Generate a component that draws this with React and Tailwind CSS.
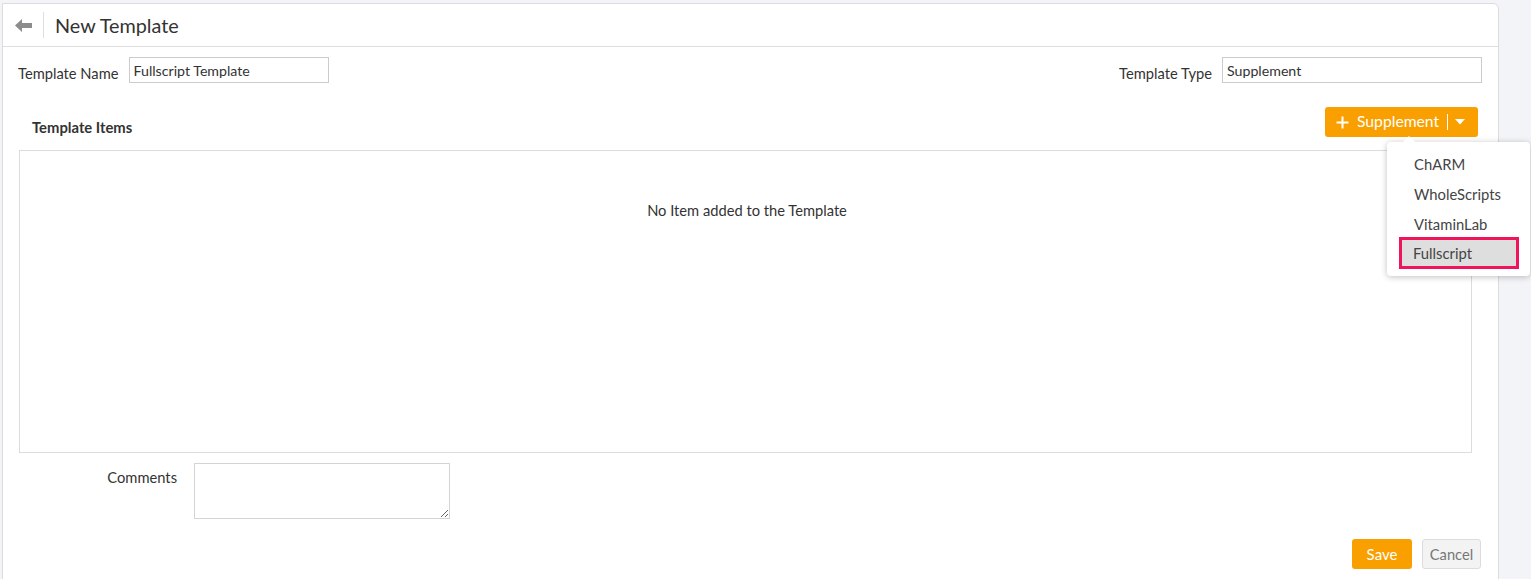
import React from "react";

const font = { fontFamily: "Lato, 'Open Sans', sans-serif" };

const App = () => {
  const items = ["ChARM", "WholeScripts", "VitaminLab", "Fullscript"];

  return (
    <div className="w-[1531px] h-[579px] bg-[#f3f4f8] overflow-hidden text-[#333]" style={font}>
      <div className="ml-[2px] mt-[3px] w-[1497px] h-[600px] bg-white border border-[#dcdcdc] rounded-tr-[6px]">
        {/* header */}
        <div className="h-[43px] flex items-center border-b border-[#dedede]">
          <div className="w-[40px] flex justify-center">
            <svg width="17" height="13" viewBox="0 0 17 13">
              <path d="M0 6.5 L7 0 L7 4 L17 4 L17 9 L7 9 L7 13 Z" fill="#8c8c8c" />
            </svg>
          </div>
          <div className="w-px h-[26px] bg-[#dedede]" />
          <h1 className="ml-[11px] text-[19.8px] text-[#333] leading-none mt-[1px]">New Template</h1>
        </div>

        {/* name / type */}
        <div className="flex items-center justify-between pl-[15px] pr-[16px] mt-[10px]">
          <div className="flex items-center">
            <span className="text-[14.7px] leading-[20px] mt-[5px]">Template Name</span>
            <input
              className="ml-[10px] w-[200px] h-[26px] border border-[#ccc] px-[4px] text-[14.2px] outline-none"
              defaultValue="Fullscript Template"
            />
          </div>
          <div className="flex items-center">
            <span className="text-[14.7px] leading-[20px] mt-[5px]">Template Type</span>
            <input
              className="ml-[10px] w-[260px] h-[26px] border border-[#ccc] px-[4px] text-[14.2px] outline-none"
              defaultValue="Supplement"
            />
          </div>
        </div>

        {/* template items header */}
        <div className="flex items-center justify-between pl-[29px] pr-[20px] mt-[24px]">
          <span className="text-[14.8px] leading-[20px] font-bold mt-[9px]">Template Items</span>
          <div className="relative">
            <button className="h-[30px] w-[153px] bg-[#f9a000] rounded-[3px] text-white text-[15.7px] flex items-center pl-[11px]">
              <svg width="13" height="13" viewBox="0 0 13 13">
                <path d="M6.5 0.5 V12.5 M0.5 6.5 H12.5" stroke="#fff" strokeWidth="2" />
              </svg>
              <span className="ml-[8px]">Supplement</span>
              <span className="ml-[8px] w-px h-[16px] bg-white" />
              <svg className="ml-[7px]" width="10" height="6" viewBox="0 0 10 6">
                <path d="M0 0 H10 L5 5.5 Z" fill="#fff" />
              </svg>
            </button>
            <div className="absolute left-[62px] top-[35px] w-[143px] bg-white rounded-[4px] shadow-[0_1px_6px_rgba(0,0,0,0.25)] z-10 pt-[7px] pb-[7px] px-[13px]">
              <div className="absolute left-[16px] -top-[6px] w-0 h-0 border-l-[6px] border-r-[6px] border-b-[6px] border-l-transparent border-r-transparent border-b-white" />
              {items.map((it) => (
                <div
                  key={it}
                  className={
                    it === "Fullscript"
                      ? "h-[32px] -mt-[2px] flex items-center pl-[11px] -ml-[1px] mr-[-2px] bg-[#dedede] border-[3px] border-[#f0145a] text-[14.8px] text-[#444]"
                      : "h-[30px] flex items-center pl-[14px] text-[14.8px] text-[#444]"
                  }
                >
                  {it}
                </div>
              ))}
            </div>
          </div>
        </div>

        {/* items box */}
        <div className="ml-[16px] mt-[13px] w-[1453px] h-[303px] border border-[#dcdcdc] flex justify-center">
          <span className="text-[14.7px] mt-[48px] pl-[3px]">No Item added to the Template</span>
        </div>

        {/* comments */}
        <div className="flex mt-[10px]">
          <div className="w-[174px] text-right text-[14.7px] pt-[3px]">Comments</div>
          <textarea className="ml-[17px] w-[256px] h-[56px] border border-[#d4d4d4] outline-none" />
        </div>

        {/* actions */}
        <div className="flex justify-end pr-[17px] mt-[20px] gap-[10px]">
          <button className="w-[60px] h-[30px] bg-[#f9a000] text-white text-[15px] rounded-[3px]">Save</button>
          <button className="w-[59px] h-[30px] bg-[#f3f3f3] border border-[#dcdcdc] text-[#777] text-[14.7px] rounded-[3px]">Cancel</button>
        </div>
      </div>
    </div>
  );
};

export default App;
